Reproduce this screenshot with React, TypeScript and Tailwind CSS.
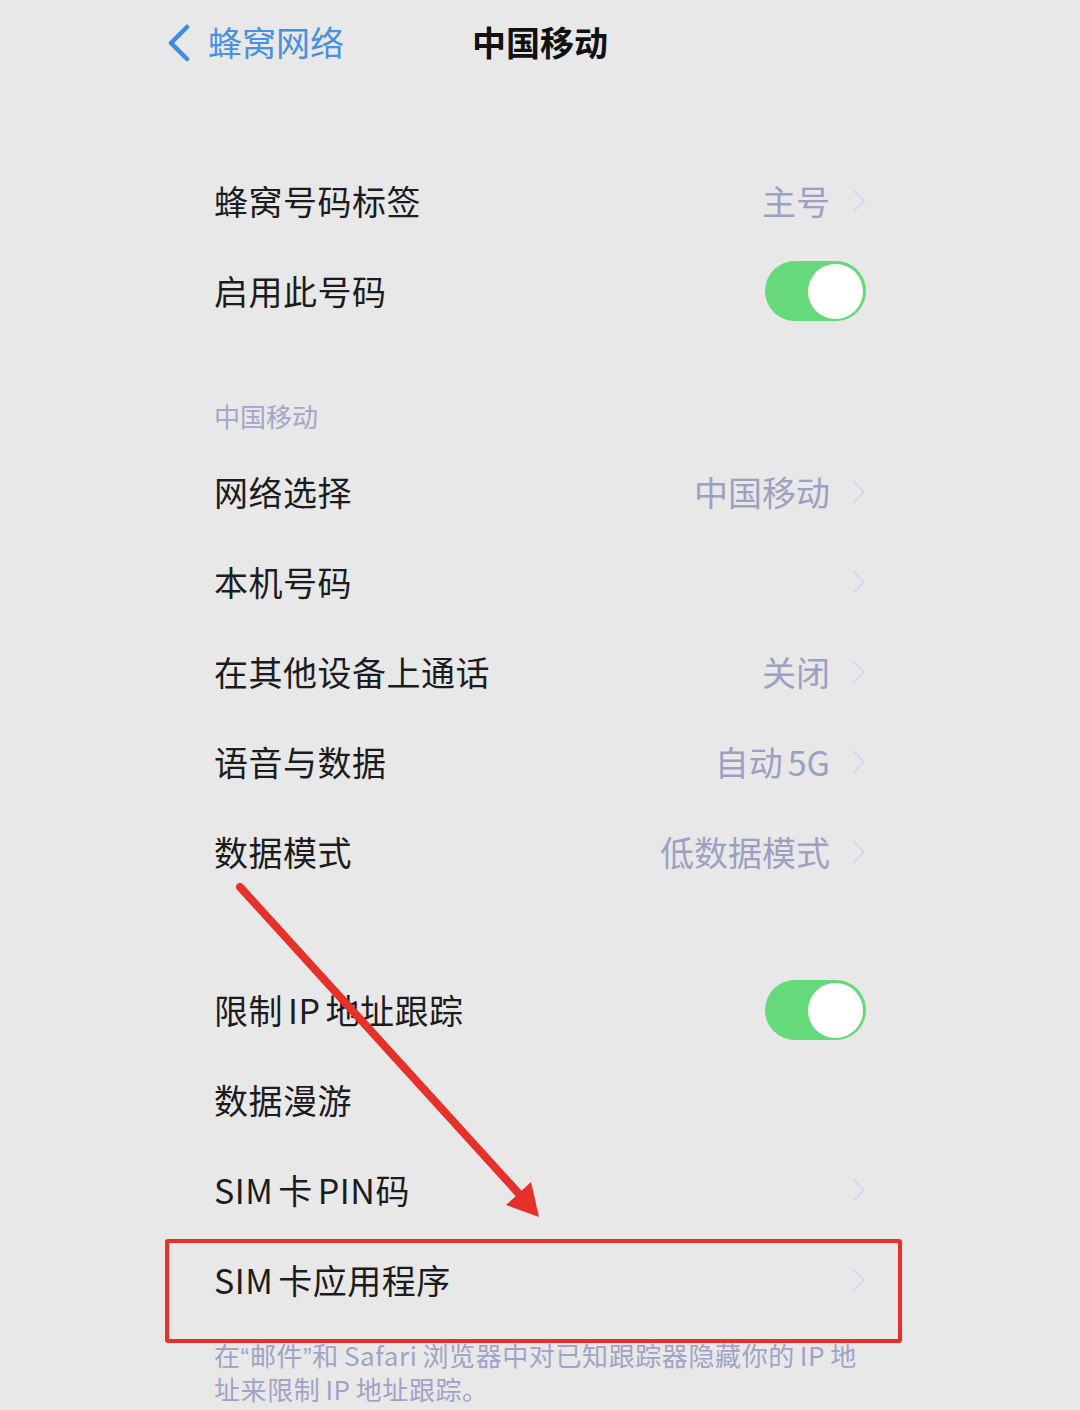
import { ReactNode } from "react";

const font = { fontFamily: '"Noto Sans CJK SC", "Noto Sans", sans-serif' };

// latin words inside CJK text get a small gap on each side, like iOS does
const L = ({ children }: { children: ReactNode }) => <span className="mx-[5px]">{children}</span>;

const Chevron = () => (
  <svg width="14" height="24" viewBox="0 0 14 24" className="shrink-0">
    <path d="M2 2 L12 12 L2 22" fill="none" stroke="#d4d8ec" strokeWidth="2" strokeLinecap="round" strokeLinejoin="round" />
  </svg>
);

const Toggle = () => (
  <div className="w-[101px] h-[60px] rounded-full bg-[#66d97b] flex items-center justify-end pr-[3px]">
    <div className="w-[55px] h-[55px] rounded-full bg-white"></div>
  </div>
);

const Row = ({ label, value, right }: { label: ReactNode; value?: ReactNode; right?: ReactNode }) => (
  <div className="h-[90px] flex items-center justify-between">
    <div className="text-[34px] leading-none text-[#1c1c1e] tracking-[0.5px] whitespace-nowrap">{label}</div>
    {right ?? (
      <div className="flex items-center gap-[22px]">
        {value && <span className="text-[34px] leading-none text-[#9ea0c3] whitespace-nowrap">{value}</span>}
        <Chevron />
      </div>
    )}
  </div>
);

export default function App() {
  return (
    <div className="relative w-[1080px] min-h-[1410px] bg-[#e8e8e8] overflow-hidden" style={font}>
      {/* nav bar */}
      <div className="h-[86px] grid grid-cols-[1fr_auto_1fr] items-center">
        <div className="flex items-center pl-[166px] gap-[16px]">
          <svg width="26" height="38" viewBox="0 0 26 38">
            <path d="M21 3 L5 19 L21 35" fill="none" stroke="#3f8ae8" strokeWidth="4.5" strokeLinecap="round" strokeLinejoin="round" />
          </svg>
          <span className="text-[34px] leading-none text-[#4a8fe6] -mt-[2px]">蜂窝网络</span>
        </div>
        <div className="text-[34px] leading-none font-bold text-[#111] -mt-[2px]">中国移动</div>
        <div></div>
      </div>

      <div className="ml-[214px] w-[652px] mt-[70px]">
        <Row label="蜂窝号码标签" value="主号" />
        <Row label="启用此号码" right={<Toggle />} />

        <div className="h-[111px] pt-[65px]">
          <div className="text-[26px] leading-[30px] text-[#a3a6c9]">中国移动</div>
        </div>

        <Row label="网络选择" value="中国移动" />
        <Row label="本机号码" />
        <Row label="在其他设备上通话" value="关闭" />
        <Row label="语音与数据" value={<>自动<span className="ml-[5px]">5G</span></>} />
        <Row label="数据模式" value="低数据模式" />

        <div className="h-[68px]"></div>

        <Row label={<>限制<L>IP</L>地址跟踪</>} right={<Toggle />} />
        <Row label="数据漫游" right={<div></div>} />
        <Row label={<>SIM<L>卡</L>PIN码</>} />
        <Row label={<>SIM<span className="ml-[5px]">卡应用程序</span></>} />

        <div className="mt-[14px] text-[26px] leading-[31px] text-[#a0a3c6] whitespace-nowrap tracking-[0.6px]">
          <div>
            在<span style={{ fontFamily: '"Liberation Sans", sans-serif' }}>“</span>邮件
            <span style={{ fontFamily: '"Liberation Sans", sans-serif' }}>”</span>和<L>Safari</L>浏览器中对已知跟踪器隐藏你的<L>IP</L>地
          </div>
          <div>
            址来限制<L>IP</L>地址跟踪。
          </div>
        </div>
      </div>

      {/* annotation: red box */}
      <div className="absolute left-[165px] top-[1239px] w-[737px] h-[104px] border-[4px] border-[#e8302a] rounded-[3px]"></div>

      {/* annotation: red arrow */}
      <svg className="absolute left-0 top-0 pointer-events-none" width="1080" height="1410" viewBox="0 0 1080 1410">
        <line x1="240" y1="887" x2="521" y2="1196" stroke="#e8302a" strokeWidth="8" strokeLinecap="round" />
        <polygon points="539,1217 506,1205 531,1182" fill="#e8302a" />
      </svg>
    </div>
  );
}
